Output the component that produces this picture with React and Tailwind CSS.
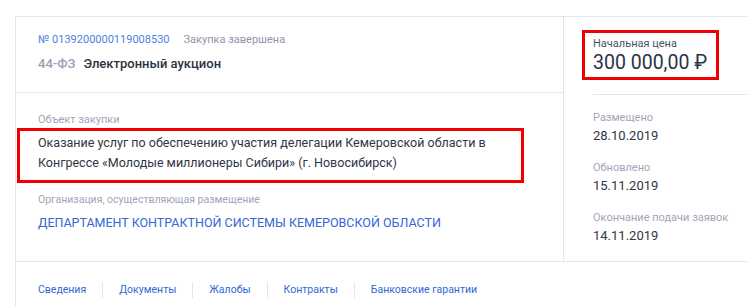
import React from 'react';

const dates = [
    { label: 'Размещено', value: '28.10.2019' },
    { label: 'Обновлено', value: '15.11.2019' },
    { label: 'Окончание подачи заявок', value: '14.11.2019' },
];

const tabs = ['Сведения', 'Документы', 'Жалобы', 'Контракты', 'Банковские гарантии'];

export default function App() {
    return (
        <div className="min-h-screen bg-white pl-[15px] pt-[16px] font-['Roboto',sans-serif]">
            <div className="border-l border-t border-[#e3e5ee]">
                {/* Main row */}
                <div className="flex border-b border-[#e3e5ee]">
                    {/* Left column */}
                    <div className="w-[548px] border-r border-[#e3e5ee]">
                        <div className="border-b border-[#e3e5ee] pl-[22px] pt-[15px] pb-[19px]">
                            <div className="flex items-center gap-[14px] text-[11px] leading-[16px]">
                                <span className="text-[#4f7fe0]">№ 0139200000119008530</span>
                                <span className="text-[#8f96a8]">Закупка завершена</span>
                            </div>
                            <div className="mt-[7px] flex items-center gap-[8px] text-[13px] leading-[18px] font-medium">
                                <span className="text-[#99a1b4]">44-ФЗ</span>
                                <span className="text-[#2b3240]">Электронный аукцион</span>
                            </div>
                        </div>

                        <div className="pl-[22px] pt-[19px] pb-[29px]">
                            <div className="text-[11px] leading-[16px] text-[#a0a6b7]">Объект закупки</div>
                            <div className="-ml-[21px] mr-[39px] border-[3px] border-[#f00000] pl-[18px] pt-[2px] pb-[7px] text-[12.5px] leading-[20px] text-[#2f3646]">
                                Оказание услуг по обеспечению участия делегации Кемеровской области в
                                <br />
                                Конгрессе «Молодые миллионеры Сибири» (г. Новосибирск)
                            </div>
                            <div className="mt-[9px] text-[10.5px] leading-[16px] text-[#a0a6b7]">
                                Организация, осуществляющая размещение
                            </div>
                            <div className="mt-[6px] text-[12.5px] leading-[18px] text-[#3366d6]">
                                ДЕПАРТАМЕНТ КОНТРАКТНОЙ СИСТЕМЫ КЕМЕРОВСКОЙ ОБЛАСТИ
                            </div>
                        </div>
                    </div>

                    {/* Right column */}
                    <div className="flex-1 pl-[29px] pt-[13px]">
                        <div className="-ml-[11px] w-[137px] border-[3px] border-[#f00000] pl-[8px] pt-[3px] pb-[3px]">
                            <div className="text-[11px] leading-[16px] text-[#4a5266]">Начальная цена</div>
                            <div className="text-[19.5px] leading-[22px] text-[#2b3346]">300 000,00 ₽</div>
                        </div>
                        <div className="mt-[14px] border-t border-[#e3e5ee] pt-[15px]">
                            {dates.map((d) => (
                                <div key={d.label} className="mb-[15px]">
                                    <div className="text-[11px] leading-[16px] text-[#a0a6b7]">{d.label}</div>
                                    <div className="mt-[1px] text-[13px] leading-[18px] text-[#2f3646]">{d.value}</div>
                                </div>
                            ))}
                        </div>
                    </div>
                </div>

                {/* Tabs */}
                <div className="flex items-center gap-[16px] pl-[22px] pt-[20px] pb-[8px] text-[10.5px] leading-[16px] text-[#3366d6]">
                    {tabs.map((t, i) => (
                        <React.Fragment key={t}>
                            {i > 0 && <span className="h-[16px] border-l border-[#e3e5ee]"></span>}
                            <span>{t}</span>
                        </React.Fragment>
                    ))}
                </div>
            </div>
        </div>
    );
}
